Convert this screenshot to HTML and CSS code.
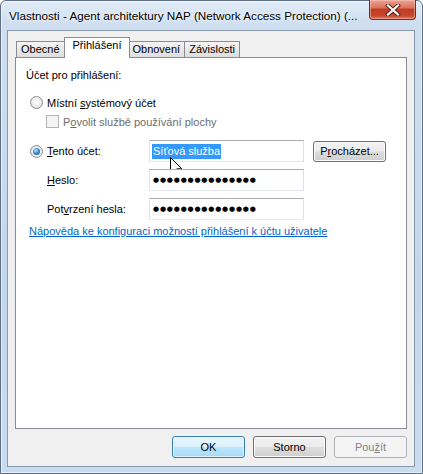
FILE: index.html
```html
<!DOCTYPE html>
<html lang="cs">
<head>
    <meta charset="UTF-8">
    <title>Vlastnosti - Agent architektury NAP</title>
<link rel="stylesheet" href="styles.css">
</head>
<body>

    <div class="window">
        <div class="titlebar">
            <span class="title">Vlastnosti - Agent architektury NAP (Network Access Protection) (...</span>
            <button class="close-btn" title="Zavřít">
                <svg width="16" height="12" viewBox="0 0 16 12">
                    <path d="M3 1.5 L13 10.5 M13 1.5 L3 10.5" stroke="#5b1e16" stroke-width="4" stroke-linecap="square"/>
                    <path d="M3 1.5 L13 10.5 M13 1.5 L3 10.5" stroke="#fff" stroke-width="2.2" stroke-linecap="square"/>
                </svg>
            </button>
        </div>

        <div class="client">
            <div class="tabs">
                <div class="tab">Obecné</div>
                <div class="tab active">Přihlášení</div>
                <div class="tab">Obnovení</div>
                <div class="tab">Závislosti</div>
            </div>

            <div class="panel">
                <p class="group-label">Účet pro přihlášení:</p>

                <label class="option">
                    <span class="radio"></span>
                    <span>Místní <u>s</u>ystémový účet</span>
                </label>
                <label class="option sub disabled">
                    <span class="checkbox"></span>
                    <span>P<u>o</u>volit službě používání plochy</span>
                </label>

                <div class="field first">
                    <label class="field-label">
                        <span class="radio checked"></span>
                        <span><u>T</u>ento účet:</span>
                    </label>
                    <div class="textbox"><span class="selected">Síťová služba</span></div>
                    <button class="btn browse">P<u>r</u>ocházet...</button>
                    <svg class="cursor" width="13" height="20" viewBox="0 0 13 20">
                        <path d="M0.5 0.5 L0.5 16.5 L4.3 12.8 L7 18.8 L9.4 17.8 L6.8 11.8 L11.8 11.8 Z" fill="#fff" stroke="#000" stroke-width="1" stroke-linejoin="miter"/>
                    </svg>
                </div>

                <div class="field">
                    <label class="field-label indent"><span><u>H</u>eslo:</span></label>
                    <div class="textbox dots">●●●●●●●●●●●●●●●</div>
                </div>

                <div class="field">
                    <label class="field-label indent"><span>Pot<u>v</u>rzení hesla:</span></label>
                    <div class="textbox dots">●●●●●●●●●●●●●●●</div>
                </div>

                <a href="#" class="help-link">Nápověda ke konfiguraci možností přihlášení k účtu uživatele</a>
            </div>

            <div class="buttons">
                <button class="btn default">OK</button>
                <button class="btn">Storno</button>
                <button class="btn" disabled>Pou<u>ž</u>ít</button>
            </div>
        </div>
    </div>

</body>
</html>
```

FILE: styles.css
```css
/* Basic reset */
* {
    margin: 0;
    padding: 0;
    box-sizing: border-box;
}

body {
    font-family: "Liberation Sans", Arial, sans-serif;
    font-size: 11px;
    color: #000;
    background-color: #fff;
}

u {
    text-decoration: underline;
    text-underline-offset: 1px;
}

/* Window frame */
.window {
    width: 423px;
    height: 474px;
    display: flex;
    flex-direction: column;
    padding: 0 7px 6px 6px;
    border: 1px solid #5f7086;
    border-radius: 6px 6px 0 0;
    background: linear-gradient(180deg, #e3edf8 0, #cfdff0 20px, #c2d6ec 60%, #cadcef 100%);
    box-shadow: inset 0 0 0 1px rgba(255, 255, 255, 0.55);
}

.titlebar {
    height: 29px;
    display: flex;
    align-items: flex-start;
}

.title {
    font-size: 11.7px;
    padding: 8px 0 0 2px;
    white-space: nowrap;
    text-shadow: 0 0 6px #fff, 0 0 3px #fff;
}

.close-btn {
    margin-left: auto;
    margin-top: -1px;
    margin-right: -1px;
    width: 47px;
    height: 20px;
    border: 1px solid #6a2b22;
    border-top: none;
    border-radius: 0 0 4px 4px;
    background: linear-gradient(180deg, #eba596 0, #db735c 40%, #c23b23 50%, #c6452d 80%, #dd7559 100%);
    box-shadow: inset 0 0 0 1px rgba(255, 200, 190, 0.5);
    display: flex;
    align-items: center;
    justify-content: center;
}

/* Client area */
.client {
    flex: 1;
    display: flex;
    flex-direction: column;
    background-color: #f0f0f0;
    border: 1px solid #8798ad;
    padding: 6px 7px 0 7px;
}

.tabs {
    display: flex;
    align-items: flex-end;
    height: 20px;
    padding-left: 1px;
    position: relative;
    z-index: 1;
}

.tab {
    height: 16px;
    padding: 1px 4px 0 4px;
    border: 1px solid #898c95;
    border-bottom: none;
    background: linear-gradient(180deg, #f4f4f4 0, #e9e9e9 50%, #dedede 100%);
    white-space: nowrap;
}

.tab + .tab {
    margin-left: -1px;
}

.tab.active {
    height: 21px;
    margin: 0 -2px -1px -1px;
    padding: 1px 8px 0 8px;
    background: #fff;
    position: relative;
    z-index: 2;
}

.panel {
    height: 372px;
    background-color: #fff;
    border: 1px solid #898c95;
    padding: 10px 10px 0 10px;
    position: relative;
}

.group-label {
    line-height: 15px;
}

.option {
    display: flex;
    align-items: center;
    gap: 4px;
    height: 15px;
    margin: 12px 0 0 4px;
}

.option.sub {
    margin: 4px 0 0 20px;
}

.option.disabled {
    color: #6d6d6d;
}

.radio {
    width: 13px;
    height: 13px;
    border-radius: 50%;
    border: 1px solid #8c8e8f;
    background: radial-gradient(circle at 50% 45%, #fdfdfd 0, #ececec 55%, #d3d3d3 100%);
    position: relative;
    flex-shrink: 0;
}

.radio.checked::after {
    content: "";
    position: absolute;
    left: 2px;
    top: 2px;
    width: 7px;
    height: 7px;
    border-radius: 50%;
    background: radial-gradient(circle at 40% 35%, #bfe9ff 0, #3b8fd6 45%, #0c4a87 100%);
}

.checkbox {
    width: 13px;
    height: 13px;
    border: 1px solid #b4b4b4;
    background: #f4f4f4;
    flex-shrink: 0;
}

.field {
    display: flex;
    align-items: center;
    height: 22px;
    margin-top: 7px;
    position: relative;
}

.field.first {
    margin-top: 11px;
}

.field-label {
    width: 123px;
    display: flex;
    align-items: center;
    gap: 4px;
    padding-left: 4px;
}

.field-label.indent {
    padding-left: 21px;
}

.textbox {
    width: 155px;
    height: 22px;
    border: 1px solid;
    border-color: #abadb3 #dbdfe6 #e3e9ef #e2e3ea;
    background: #fff;
    padding: 0 2px;
    display: flex;
    align-items: center;
    white-space: nowrap;
}

.selected {
    background-color: #3399ff;
    color: #fff;
    line-height: 15px;
    padding: 0 1px;
}

.dots {
    font-family: "DejaVu Sans", sans-serif;
    font-size: 7px;
    letter-spacing: 0.8px;
    padding-left: 3px;
}

.cursor {
    position: absolute;
    left: 144px;
    top: 17px;
}

.help-link {
    display: block;
    margin: 4px 0 0 3px;
    line-height: 15px;
    color: #0066cc;
    text-decoration: underline;
}

/* Buttons */
.buttons {
    display: flex;
    justify-content: flex-end;
    gap: 8px;
    padding: 7px 0 8px 0;
}

.btn {
    font-family: inherit;
    font-size: 11px;
    width: 73px;
    height: 22px;
    border: 1px solid #707070;
    border-radius: 3px;
    background: linear-gradient(180deg, #f2f2f2 0, #ebebeb 48%, #dddddd 52%, #cfcfcf 100%);
    box-shadow: inset 0 0 0 1px #fbfbfb;
    color: #000;
}

.btn.default {
    border-color: #3c7fb1;
    background: linear-gradient(180deg, #eaf6fd 0, #d9f0fc 48%, #bee6fd 52%, #a7d9f5 100%);
    box-shadow: inset 0 0 0 1px #dff3fd;
}

.btn:disabled {
    border-color: #adb2b5;
    background: #f4f4f4;
    box-shadow: none;
    color: #838383;
}

.browse {
    margin-left: 9px;
    height: 21px;
}
```
